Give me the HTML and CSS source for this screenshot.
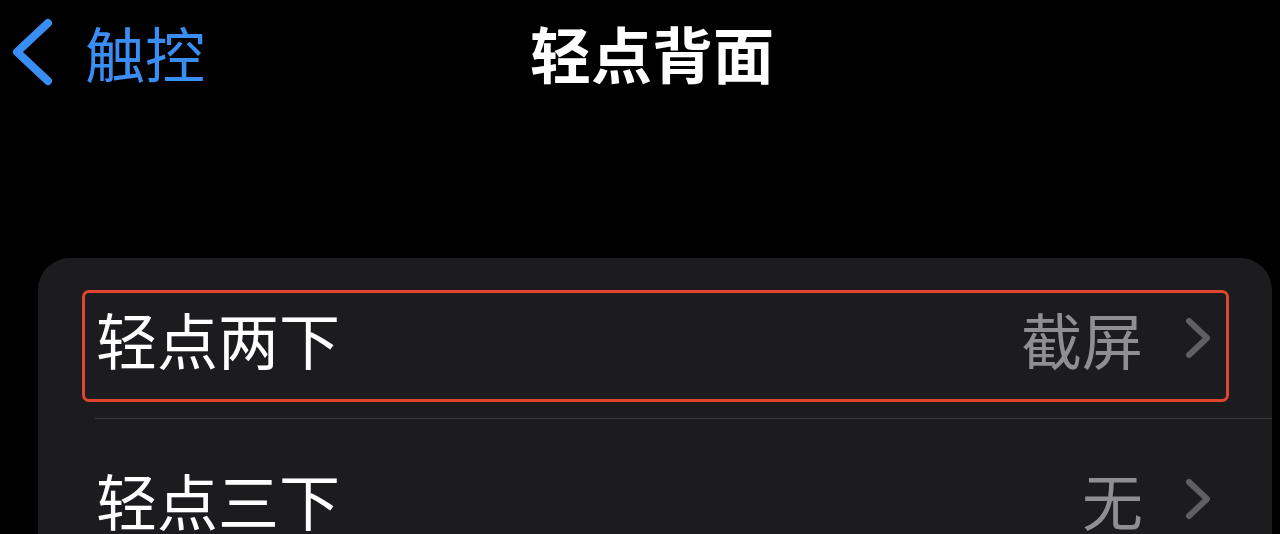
FILE: index.html
```html
<!DOCTYPE html>
<html lang="zh-CN">
<head>
<meta charset="utf-8">
<title>轻点背面</title>
<link rel="stylesheet" href="styles.css">
</head>
<body>
<header class="nav">
  <div class="back">
    <svg class="back-icon" width="44" height="70" viewBox="0 0 44 70" aria-hidden="true">
      <path d="M37 6 L6 35 L37 64" fill="none" stroke="#3a8df3" stroke-width="8" stroke-linecap="round" stroke-linejoin="round"/>
    </svg>
    <span class="back-label">触控</span>
  </div>
  <h1 class="title">轻点背面</h1>
  <div class="spacer"></div>
</header>

<main class="card">
  <div class="row row-first">
    <span class="row-label">轻点两下</span>
    <span class="row-value">截屏</span>
    <svg class="chev" width="30" height="44" viewBox="0 0 30 44" aria-hidden="true">
      <path d="M6 5 L24 22 L6 39" fill="none" stroke="#5f5f64" stroke-width="6" stroke-linecap="round" stroke-linejoin="round"/>
    </svg>
    <div class="highlight"></div>
  </div>
  <div class="sep"></div>
  <div class="row">
    <span class="row-label">轻点三下</span>
    <span class="row-value">无</span>
    <svg class="chev" width="30" height="44" viewBox="0 0 30 44" aria-hidden="true">
      <path d="M6 5 L24 22 L6 39" fill="none" stroke="#5f5f64" stroke-width="6" stroke-linecap="round" stroke-linejoin="round"/>
    </svg>
  </div>
</main>
</body>
</html>
```

FILE: styles.css
```css
html, body {
  margin: 0;
  padding: 0;
  background: #000;
  height: 534px;
  overflow: hidden;
}
body {
  font-family: "Noto Sans CJK SC", "Noto Sans", sans-serif;
  color: #fff;
}
.nav {
  display: grid;
  grid-template-columns: 1fr auto 1fr;
  align-items: center;
  height: 104px;
  padding: 0 0 0 11px;
}
.back {
  display: flex;
  align-items: center;
  gap: 30px;
}
.back-icon {
  display: block;
  flex: none;
}
.back-label {
  color: #3a8df3;
  font-size: 60px;
  line-height: 1;
}
.title {
  margin: 0;
  font-size: 61px;
  line-height: 1;
  font-weight: 700;
  padding-left: 13px;
}
.card {
  margin: 154px 8px 0 38px;
  background: #1c1c1e;
  border-radius: 32px;
  height: 321px;
}
.row {
  position: relative;
  display: flex;
  align-items: center;
  height: 160px;
  padding: 0 59px 0 58px;
}
.row-label {
  flex: 1;
  font-size: 61px;
  line-height: 1;
  color: #fff;
}
.row-value {
  font-size: 61px;
  line-height: 1;
  color: #8e8e93;
  margin-right: 40px;
}
.chev {
  display: block;
  flex: none;
}
.highlight {
  position: absolute;
  left: 44px;
  right: 43px;
  top: 32px;
  bottom: 16px;
  border: 3px solid #e2442f;
  border-radius: 7px;
}
.sep {
  height: 1px;
  background: #3a3a3c;
  margin-left: 57px;
}
```
